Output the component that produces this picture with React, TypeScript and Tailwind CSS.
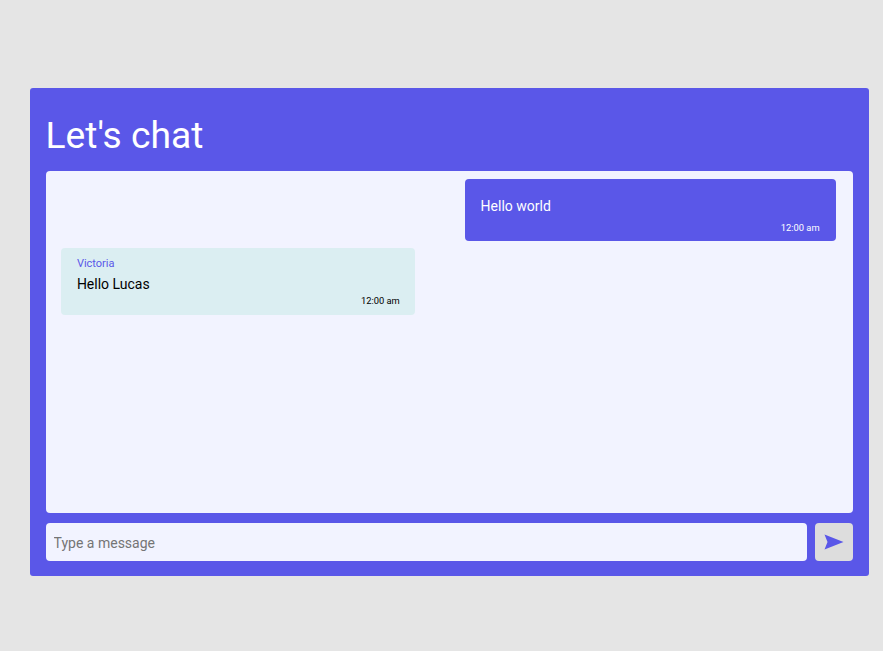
const roboto = "font-['Roboto',sans-serif]";

export default function App() {
  return (
    <div className={`min-h-[651px] bg-[#e5e5e5] pt-[87.7px] pl-[29.8px] ${roboto}`}>
      <div className="flex h-[488.7px] w-[839.2px] flex-col rounded-[3px] bg-[#5a57e8] pr-[15.8px] pb-[15.4px] pl-[15.8px]">
        <h1 className="flex h-[83px] items-center pt-[13px] text-[37.2px] leading-none font-normal text-white">Let's chat</h1>

        <div className="flex h-[342px] flex-col gap-[7px] rounded-[4px] bg-[#f2f3ff] pt-2 pr-[17px] pb-2 pl-[15.6px]">
          <div className="flex h-[62px] w-[371px] flex-col self-end rounded-[4px] bg-[#5a57e8] pr-[16.6px] pl-[15.4px] text-white">
            <p className="mt-[17px] text-sm leading-5">Hello world</p>
            <span className="mt-[6px] self-end text-[9.33px] leading-3">12:00 am</span>
          </div>

          <div className="flex h-[67px] w-[354px] flex-col rounded-[4px] bg-[#dbeef2] pr-[15.4px] pl-[15.7px] text-black">
            <span className="mt-[9px] text-[11px] leading-[14px] text-[#5a57e8]">Victoria</span>
            <p className="mt-[3px] text-sm leading-5">Hello Lucas</p>
            <span className="mt-[1px] self-end text-[9.33px] leading-3">12:00 am</span>
          </div>
        </div>

        <div className="mt-[10px] flex h-[38px] gap-2">
          <input
            type="text"
            placeholder="Type a message"
            className="h-full w-[761px] rounded-[4px] bg-[#f2f3ff] px-2 pt-[3px] text-sm text-black outline-none placeholder:text-[#757575]"
          />
          <button className="flex h-[38px] w-[38px] items-center justify-center rounded-[4px] bg-[#dddddd]">
            <svg width="20" height="16" viewBox="0 0 20 16">
              <path d="M0.5 0.5 L19.5 8 L0.5 15.5 L3.5 8 Z" fill="#5a57e8" />
            </svg>
          </button>
        </div>
      </div>
    </div>
  );
}
